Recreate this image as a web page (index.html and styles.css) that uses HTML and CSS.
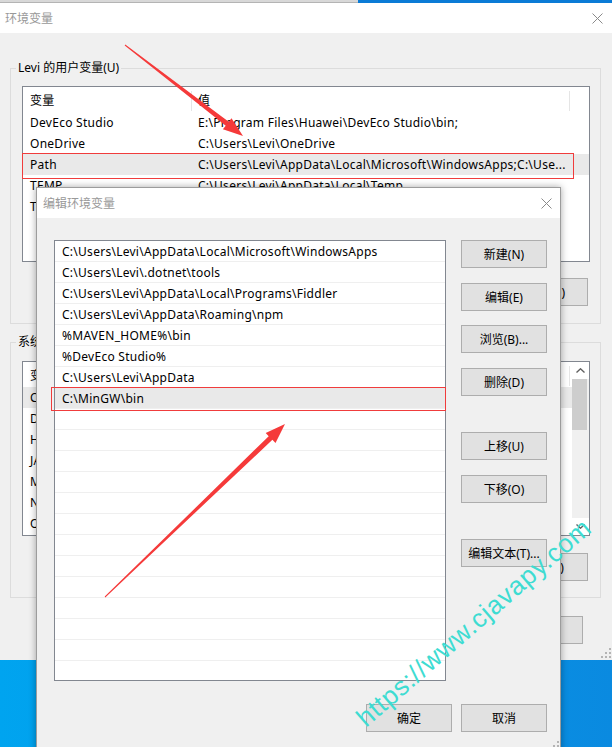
FILE: index.html
```html
<!DOCTYPE html>
<html lang="zh-CN">
  <head>
    <meta charset="utf-8">
    <title>编辑环境变量</title>
    <link rel="stylesheet" href="styles.css">
  </head>
  <body>
    <div class="desktop-strip">
      <div class="strip-window"></div>
      <div class="strip-blue"></div>
    </div>

    <div class="env-window">
      <div class="titlebar">
        <span class="title">环境变量</span>
        <svg class="close" width="11" height="11" viewBox="0 0 11 11"><path d="M0.5 0.5 L10.5 10.5 M10.5 0.5 L0.5 10.5" stroke="#8a8a8a" stroke-width="1" fill="none"/></svg>
      </div>
      <div class="env-body">
        <div class="group">
          <div class="group-label">Levi 的用户变量(U)</div>
          <div class="listview user-list">
            <div class="lv-rows">
              <div class="lv-row lv-header"><span class="col-name">变量</span><span class="col-value">值</span></div>
              <div class="lv-row"><span class="col-name">DevEco Studio</span><span class="col-value">E:\Program Files\Huawei\DevEco Studio\bin;</span></div>
              <div class="lv-row"><span class="col-name">OneDrive</span><span class="col-value">C:\Users\Levi\OneDrive</span></div>
              <div class="lv-row selected marked"><span class="col-name">Path</span><span class="col-value">C:\Users\Levi\AppData\Local\Microsoft\WindowsApps;C:\Use...</span></div>
              <div class="lv-row"><span class="col-name">TEMP</span><span class="col-value">C:\Users\Levi\AppData\Local\Temp</span></div>
              <div class="lv-row"><span class="col-name">TMP</span><span class="col-value">C:\Users\Levi\AppData\Local\Temp</span></div>
            </div>
          </div>
          <div class="btn-row">
            <button class="btn">新建(N)...</button>
            <button class="btn">编辑(E)...</button>
            <button class="btn">删除(D)</button>
          </div>
        </div>

        <div class="group sys-group">
          <div class="group-label">系统变量(S)</div>
          <div class="listview sys-list">
            <div class="lv-rows">
              <div class="lv-row lv-header"><span class="col-name">变量</span><span class="col-value">值</span></div>
              <div class="lv-row selected"><span class="col-name">ComSpec</span><span class="col-value">C:\Windows\system32\cmd.exe</span></div>
              <div class="lv-row"><span class="col-name">DriverData</span><span class="col-value">C:\Windows\System32\Drivers\DriverData</span></div>
              <div class="lv-row"><span class="col-name">HADOOP_HOME</span><span class="col-value">D:\hadoop</span></div>
              <div class="lv-row"><span class="col-name">JAVA_HOME</span><span class="col-value">C:\Program Files\Java\jdk1.8.0_202</span></div>
              <div class="lv-row"><span class="col-name">MAVEN_HOME</span><span class="col-value">D:\apache-maven-3.6.3</span></div>
              <div class="lv-row"><span class="col-name">NUMBER_OF_PROCESSORS</span><span class="col-value">8</span></div>
              <div class="lv-row"><span class="col-name">OS</span><span class="col-value">Windows_NT</span></div>
            </div>
            <div class="scrollbar">
              <div class="sb-arrow"><svg width="9" height="5" viewBox="0 0 9 5"><path d="M0.5 4.5 L4.5 0.8 L8.5 4.5" stroke="#606060" stroke-width="1.4" fill="none"/></svg></div>
              <div class="sb-track"><div class="sb-thumb"></div></div>
              <div class="sb-arrow"><svg width="9" height="5" viewBox="0 0 9 5"><path d="M0.5 0.5 L4.5 4.2 L8.5 0.5" stroke="#606060" stroke-width="1.4" fill="none"/></svg></div>
            </div>
          </div>
          <div class="btn-row">
            <button class="btn">新建(W)...</button>
            <button class="btn">编辑(I)...</button>
            <button class="btn">删除(L)</button>
          </div>
        </div>

        <div class="btn-row dialog-actions">
          <button class="btn">确定</button>
          <button class="btn">取消</button>
        </div>
      </div>
      <svg class="grip" width="10" height="10" viewBox="0 0 10 10" fill="#b4b4b4"><rect x="8" y="0" width="2" height="2"/><rect x="4" y="4" width="2" height="2"/><rect x="8" y="4" width="2" height="2"/><rect x="0" y="8" width="2" height="2"/><rect x="4" y="8" width="2" height="2"/><rect x="8" y="8" width="2" height="2"/></svg>
    </div>

    <div class="edit-dialog">
      <div class="titlebar edit-titlebar">
        <span class="title">编辑环境变量</span>
        <svg class="close" width="11" height="11" viewBox="0 0 11 11"><path d="M0.5 0.5 L10.5 10.5 M10.5 0.5 L0.5 10.5" stroke="#8a8a8a" stroke-width="1" fill="none"/></svg>
      </div>
      <div class="edit-body">
        <div class="edit-main">
          <div class="path-list">
            <div class="path-row">C:\Users\Levi\AppData\Local\Microsoft\WindowsApps</div>
            <div class="path-row">C:\Users\Levi\.dotnet\tools</div>
            <div class="path-row">C:\Users\Levi\AppData\Local\Programs\Fiddler</div>
            <div class="path-row">C:\Users\Levi\AppData\Roaming\npm</div>
            <div class="path-row">%MAVEN_HOME%\bin</div>
            <div class="path-row">%DevEco Studio%</div>
            <div class="path-row">C:\Users\Levi\AppData</div>
            <div class="path-row selected marked">C:\MinGW\bin</div>
            <div class="path-row"></div>
            <div class="path-row"></div>
            <div class="path-row"></div>
            <div class="path-row"></div>
            <div class="path-row"></div>
            <div class="path-row"></div>
            <div class="path-row"></div>
            <div class="path-row"></div>
            <div class="path-row"></div>
            <div class="path-row"></div>
            <div class="path-row"></div>
            <div class="path-row"></div>
            <div class="path-row"></div>
          </div>
          <div class="side-buttons">
            <button class="btn">新建(N)</button>
            <button class="btn">编辑(E)</button>
            <button class="btn">浏览(B)...</button>
            <button class="btn">删除(D)</button>
            <button class="btn btn-sep">上移(U)</button>
            <button class="btn">下移(O)</button>
            <button class="btn btn-sep">编辑文本(T)...</button>
          </div>
        </div>
        <div class="btn-row edit-actions">
          <button class="btn">确定</button>
          <button class="btn">取消</button>
        </div>
      </div>
      <svg class="grip" width="10" height="10" viewBox="0 0 10 10" fill="#b4b4b4"><rect x="8" y="0" width="2" height="2"/><rect x="4" y="4" width="2" height="2"/><rect x="8" y="4" width="2" height="2"/><rect x="0" y="8" width="2" height="2"/><rect x="4" y="8" width="2" height="2"/><rect x="8" y="8" width="2" height="2"/></svg>
    </div>

    <!-- screenshot annotations: arrows and site watermark -->
    <svg class="annotations" width="612" height="747" viewBox="0 0 612 747">
      <polygon fill="#f53a3a" points="125.3,44.6 228.7,121.8 231.5,118.3 243,136 222.9,129.3 225.7,125.8 124.7,45.4"/>
      <polygon fill="#f53a3a" points="104.7,596.6 268.7,436.2 265.7,432.9 285,424 275.5,443 272.4,439.8 105.3,597.4"/>
      <text class="watermark" x="366" y="728" transform="rotate(-41 366 728)">https://www.cjavapy.com</text>
    </svg>
  </body>
</html>
```

FILE: styles.css
```css
* {
    box-sizing: border-box;
}

html, body {
    margin: 0;
    height: 747px;
    overflow: hidden;
}

body {
    position: relative;
    font-family: "Noto Sans", "Noto Sans CJK SC", sans-serif;
    font-size: 12px;
    color: #000;
    background: linear-gradient(90deg, #00a4ef 0, #049ceb 30%, #0a8ae0 100%);
}

.desktop-strip {
    display: flex;
    height: 3px;
}

.strip-window {
    width: 358px;
    background: #d8d8d8;
    border-bottom: 1px solid #b4b4b4;
}

.strip-blue {
    flex: 1;
    background: #0a7bd6;
}

/* background window */

.env-window {
    position: relative;
    height: 657px;
    background: #f0f0f0;
}

.titlebar {
    display: flex;
    align-items: center;
    justify-content: space-between;
    height: 30px;
    padding: 0 9px 0 5px;
    background: #fff;
}

.title {
    color: #999;
    font-size: 12px;
}

.env-body {
    padding: 35px 11px 0 10px;
}

.group {
    border: 1px solid #dcdcdc;
    padding: 0 10px 17px 11px;
}

.sys-group {
    margin-top: 18px;
    padding-bottom: 16px;
}

.group-label {
    width: fit-content;
    margin: -9px 0 0 -6px;
    padding: 0 2px;
    line-height: 16px;
    background: #f0f0f0;
}

.listview {
    display: flex;
    margin-top: 10px;
    height: 176px;
    background: #fff;
    border: 1px solid #828790;
}

.sys-list {
    margin-top: 11px;
    height: 175px;
}

.lv-rows {
    flex: 1;
    min-width: 0;
}

.lv-row {
    position: relative;
    display: flex;
    align-items: center;
    height: 21px;
    white-space: nowrap;
    letter-spacing: 0.27px;
}

.lv-header {
    height: 25px;
    align-items: flex-start;
    padding-top: 4px;
}

.col-name {
    flex: none;
    width: 169px;
    padding-left: 7px;
    overflow: hidden;
}

.col-value {
    flex: 1;
    min-width: 0;
    padding-left: 6px;
    overflow: hidden;
}

.lv-header .col-name,
.lv-header .col-value {
    height: 20px;
    border-right: 1px solid #e5e5e5;
}

.lv-header .col-value {
    flex: none;
    width: 378px;
}

.lv-row.selected {
    background: #e9e9e9;
}

.lv-row.marked::after {
    content: "";
    position: absolute;
    left: -1px;
    top: -1px;
    width: 550px;
    height: 24px;
    border: 1px solid #f03c3c;
}

.scrollbar {
    display: flex;
    flex-direction: column;
    width: 17px;
    background: #f0f0f0;
}

.sb-arrow {
    display: flex;
    align-items: center;
    justify-content: center;
    height: 17px;
    background: #fff;
}

.sb-track {
    flex: 1;
}

.sb-thumb {
    width: 15px;
    height: 51px;
    background: #cdcdcd;
}

.btn-row {
    display: flex;
    justify-content: flex-end;
    gap: 9px;
    margin-top: 16px;
    padding-right: 2px;
}

.sys-group .btn-row {
    margin-top: 17px;
}

.dialog-actions {
    margin-top: 18px;
    padding-right: 18px;
}

.btn {
    width: 86px;
    height: 28px;
    padding: 0;
    font: inherit;
    color: #000;
    background: #e1e1e1;
    border: 1px solid #adadad;
}

.grip {
    position: absolute;
    right: 1px;
    bottom: 2px;
}

/* foreground dialog */

.edit-dialog {
    position: absolute;
    left: 36px;
    top: 187px;
    width: 525px;
    height: 580px;
    background: #f0f0f0;
    border: 1px solid #9c9c9c;
    box-shadow: 0 0 7px rgba(0, 0, 0, 0.35);
}

.edit-titlebar {
    padding: 0 8px 0 6px;
}

.edit-body {
    padding: 22px 13px 0 17px;
}

.edit-main {
    display: flex;
    gap: 15px;
}

.path-list {
    width: 392px;
    height: 441px;
    background: #fff;
    border: 1px solid #828790;
}

.path-row {
    position: relative;
    height: 21px;
    padding: 2px 0 0 7px;
    border-bottom: 1px solid #efefef;
    white-space: nowrap;
    letter-spacing: 0.27px;
}

.path-row:last-child {
    height: 19px;
    border-bottom: none;
}

.path-row.selected {
    background: #e9e9e9;
}

.path-row.marked::after {
    content: "";
    position: absolute;
    left: -4px;
    top: -1px;
    width: 393px;
    height: 22px;
    border: 1px solid #f03c3c;
}

.side-buttons {
    display: flex;
    flex-direction: column;
    gap: 14.5px;
}

.btn-sep {
    margin-top: 22px;
}

.edit-actions {
    margin-top: 23px;
    padding-right: 0;
}

.edit-dialog .grip {
    top: 553px;
    bottom: auto;
}

.annotations {
    position: absolute;
    left: 0;
    top: 0;
    pointer-events: none;
}

.watermark {
    font-family: "Liberation Sans", sans-serif;
    font-size: 26px;
    letter-spacing: 0.8px;
    fill: #3edcd2;
}
```
